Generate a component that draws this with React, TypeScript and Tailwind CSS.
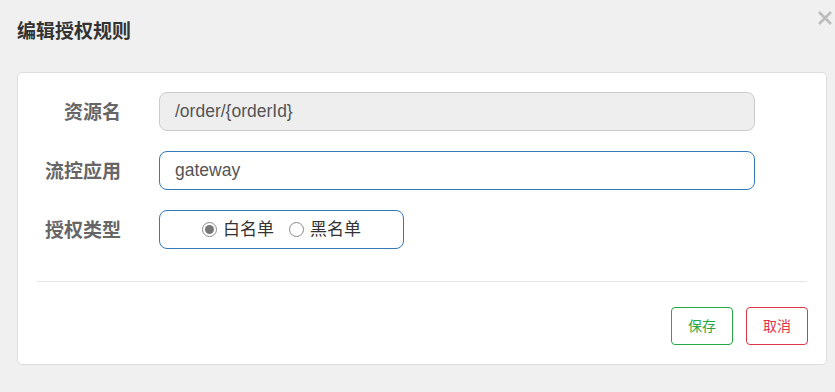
import React from "react";

const font = { fontFamily: '"Liberation Sans", "Noto Sans CJK SC", sans-serif' };

function Field({ label, children }: { label: string; children: React.ReactNode }) {
  return (
    <div className="flex items-center">
      <label className="w-[103px] pt-[4px] text-right text-[19px] font-bold text-[#666]">{label}</label>
      <div className="ml-[38px]">{children}</div>
    </div>
  );
}

export default function App() {
  const [mode, setMode] = React.useState(0);

  return (
    <div className="relative h-[392px] w-[835px] bg-[#f0f0f0]" style={font}>
      <button className="absolute right-[3px] top-[11px] text-[#bdbdbd]">
        <svg width="14" height="14" viewBox="0 0 14 14">
          <path d="M2 2 L12 12 M12 2 L2 12" stroke="currentColor" strokeWidth="2.8" strokeLinecap="square" />
        </svg>
      </button>

      <h3 className="px-[17px] pt-[18px] text-[19px] font-bold leading-[27px] text-[#333]">编辑授权规则</h3>

      <div className="ml-[17px] mt-[27px] w-[810px] rounded-[5px] border border-[#ddd] bg-white">
        <div className="flex flex-col gap-[20px] pt-[19px]">
          <Field label="资源名">
            <input
              disabled
              value="/order/{orderId}"
              className="h-[39px] w-[596px] rounded-[8px] border border-[#ccc] bg-[#eee] px-[15px] text-[17.5px] text-[#555]"
            />
          </Field>
          <Field label="流控应用">
            <input
              defaultValue="gateway"
              className="h-[39px] w-[596px] rounded-[8px] border border-[#337ab7] bg-white px-[15px] text-[17.5px] text-[#555] outline-none"
            />
          </Field>
          <Field label="授权类型">
            <div className="flex h-[39px] w-[245px] items-center justify-center gap-[15px] rounded-[8px] border border-[#337ab7] text-[17px] text-[#333]">
              {["白名单", "黑名单"].map((t, i) => (
                <label key={t} className="flex cursor-pointer items-center gap-[6px]" onClick={() => setMode(i)}>
                  <span className="flex size-[15px] items-center justify-center rounded-full border border-[#888]">
                    {mode === i && <span className="size-[9px] rounded-full bg-[#777]" />}
                  </span>
                  {t}
                </label>
              ))}
            </div>
          </Field>
        </div>

        <div className="mx-[19px] mt-[32px] border-t border-[#e5e5e5]" />

        <div className="flex justify-end gap-[13px] px-[18px] pb-[19px] pt-[25px]">
          <button className="h-[38px] w-[62px] rounded-[4px] border border-[#28a745] text-[14px] text-[#28a745]">保存</button>
          <button className="h-[38px] w-[62px] rounded-[4px] border border-[#dc3545] text-[14px] text-[#dc3545]">取消</button>
        </div>
      </div>
    </div>
  );
}
